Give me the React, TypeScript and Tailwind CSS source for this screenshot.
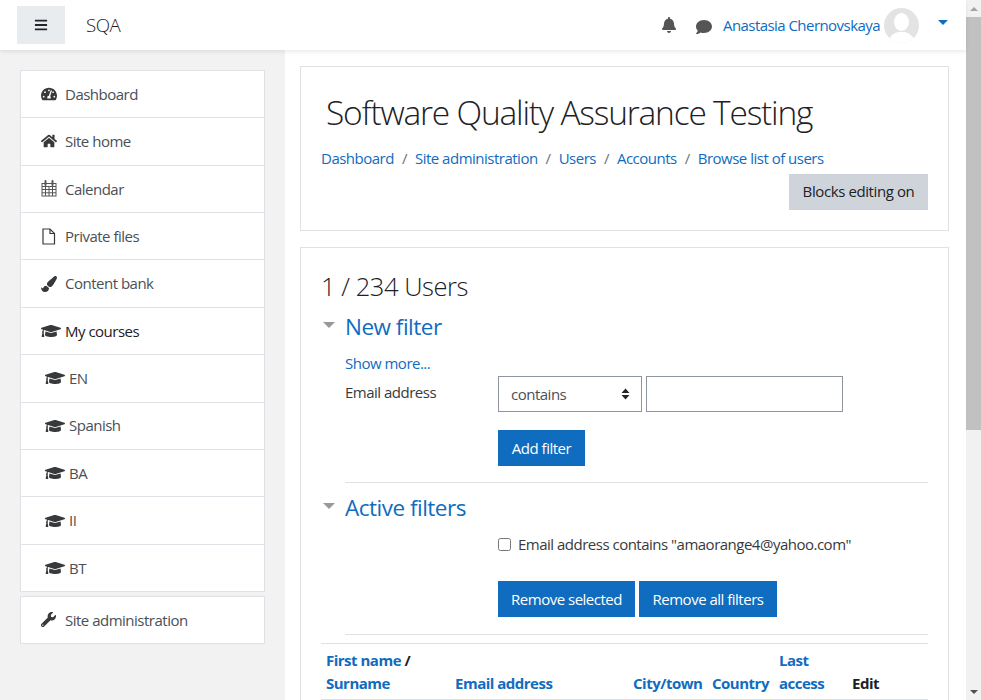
import { FaBars, FaBell, FaComment, FaGraduationCap, FaHome, FaPaintBrush, FaTachometerAlt, FaWrench } from 'react-icons/fa';
import type { ReactNode } from 'react';

function CalendarIcon() {
  return (
    <svg width="16" height="17" viewBox="0 0 16 17" fill="none" stroke="currentColor" strokeWidth="1" opacity="0.85">
      <rect x="1" y="3.500" width="14" height="12.500" />
      <path d="M1 6.500h14M1 9.500h14M1 12.800h14M4.500 6.500v9.500M8 6.500v9.500M11.500 6.500v9.500" />
      <path d="M4.500 1v4M11.500 1v4" strokeWidth="2" strokeLinecap="round" />
    </svg>
  );
}

function FileIcon() {
  return (
    <svg width="15" height="17" viewBox="0 0 15 17" fill="none" stroke="currentColor" strokeWidth="1.200">
      <path d="M2 1h7l4.500 4.500V16H2z" />
      <path d="M9 1v4.500h4.500" />
    </svg>
  );
}

const navItems = [
  { label: 'Dashboard', icon: <FaTachometerAlt size={16} /> },
  { label: 'Site home', icon: <FaHome size={16} /> },
  { label: 'Calendar', icon: <CalendarIcon /> },
  { label: 'Private files', icon: <FileIcon /> },
  { label: 'Content bank', icon: <FaPaintBrush size={16} /> },
  { label: 'My courses', icon: <FaGraduationCap size={20} />, dark: true },
  { label: 'EN', icon: <FaGraduationCap size={20} />, sub: true },
  { label: 'Spanish', icon: <FaGraduationCap size={20} />, sub: true },
  { label: 'BA', icon: <FaGraduationCap size={20} />, sub: true },
  { label: 'II', icon: <FaGraduationCap size={20} />, sub: true },
  { label: 'BT', icon: <FaGraduationCap size={20} />, sub: true },
];

const crumbs = ['Dashboard', 'Site administration', 'Users', 'Accounts', 'Browse list of users'];

function SideRow({ icon, label, dark, sub }: { icon: ReactNode; label: string; dark?: boolean; sub?: boolean }) {
  return (
    <div className={`flex items-center h-[47.4px] first:h-[47.2px] last:h-[46.2px] border-b border-[#dee2e6] last:border-b-0 ${sub ? 'pl-[24px]' : 'pl-[20px]'} ${dark ? 'text-[#1d2125]' : 'text-[#495057]'}`}>
      <span className="flex items-center shrink-0 w-[24px] text-[#373a3c]">{icon}</span>
      <span>{label}</span>
    </div>
  );
}

function Caret() {
  return <span className="w-0 h-0 border-x-[6px] border-x-transparent border-t-[6px] border-t-[#999] ml-[2px] mr-[10px] mt-[-4px]" />;
}

function BlueButton({ children, width }: { children: ReactNode; width: string }) {
  return <button className={`h-[36px] bg-[#0f6cbf] text-white ${width}`}>{children}</button>;
}

export default function App() {
  return (
    <div className="h-[700px] overflow-hidden flex bg-white text-[15px] tracking-[-0.5px] text-[#373a3c] font-['Open_Sans',sans-serif]">
      <div className="flex-1 min-w-0 flex flex-col">
        <header className="h-[50px] shrink-0 bg-white shadow-[0_2px_4px_rgba(0,0,0,0.08)] flex items-center relative z-10 pl-[17px] pr-[18px]">
          <button className="w-[48px] h-[38px] bg-[#e9ecef] flex items-center justify-center text-[#212529]">
            <FaBars size={14} />
          </button>
          <span className="ml-[21px] text-[18.75px] font-light text-[#1d2125]">SQA</span>
          <div className="ml-auto flex items-center">
            <FaBell size={16} className="text-[#555]" />
            <FaComment size={16} className="text-[#555] ml-[19px] mt-[4px]" />
            <span className="ml-[11px] tracking-[-0.55px] text-[#0f6cbf]">Anastasia Chernovskaya</span>
            <svg width="35" height="35" viewBox="0 0 35 35" className="ml-[4px]">
              <defs>
                <clipPath id="avatar"><circle cx="17.5" cy="17.5" r="17.5" /></clipPath>
              </defs>
              <g clipPath="url(#avatar)">
                <rect width="35" height="35" fill="#e3e3e3" />
                <ellipse cx="17.5" cy="14" rx="7.5" ry="9" fill="#fff" />
                <path d="M4 35c1-8 7-10 10-11h7c3 1 9 3 10 11z" fill="#fff" />
              </g>
            </svg>
            <span className="ml-[19px] mt-[-5px] w-0 h-0 border-x-[5px] border-x-transparent border-t-[5px] border-t-[#0f6cbf]" />
          </div>
        </header>

        <div className="flex flex-1 min-h-0">
          <aside className="w-[285px] shrink-0 bg-[#f2f2f2] pt-[20px] pl-[20px] pr-[20px]">
            <nav className="bg-white border border-[#dee2e6]">
              {navItems.map((item) => (
                <SideRow key={item.label} {...item} />
              ))}
            </nav>
            <div className="mt-[4px] bg-white border border-[#dee2e6]">
              <div className="flex items-center h-[46px] pl-[20px] text-[#495057]">
                <span className="flex items-center shrink-0 w-[24px] text-[#373a3c]"><FaWrench size={15} /></span>
                <span>Site administration</span>
              </div>
            </div>
          </aside>

          <main className="flex-1 min-w-0 pt-[16px] pl-[15px] pr-[17px]">
            <section className="h-[165px] border border-[#dee2e6] pt-[19px] pl-[20px] pr-[20px]">
              <h1 className="ml-[5px] text-[33.5px] leading-[52px] tracking-[-1.2px] font-light text-[#1d2125]">Software Quality Assurance Testing</h1>
              <div className="mt-[9px] flex items-center text-[#0f6cbf]">
                {crumbs.map((crumb, i) => (
                  <span key={crumb} className="flex items-center">
                    {i > 0 && <span className="mx-[8px] text-[#6a737b]">/</span>}
                    {crumb}
                  </span>
                ))}
              </div>
              <div className="flex justify-end mt-[4px]">
                <button className="h-[36px] w-[139px] tracking-[-0.4px] bg-[#ced4da] text-[#1d2125]">Blocks editing on</button>
              </div>
            </section>

            <section className="mt-[16px] border border-[#dee2e6] pt-[20px] pl-[20px] pr-[20px] h-[600px]">
              <h2 className="text-[25.5px] leading-[36px] tracking-[-0.45px] font-light text-[#1d2125]">1 / 234 Users</h2>

              <div className="flex items-center mt-[6px]">
                <Caret />
                <h3 className="text-[22.5px] leading-[34px] text-[#0f6cbf] font-normal">New filter</h3>
              </div>
              <div className="pl-[24px]">
                <div className="mt-[8px] text-[#0f6cbf] leading-[22px]">Show more...</div>
                <div className="flex mt-[2px]">
                  <div className="w-[153px] mt-[5px] leading-[22px]">Email address</div>
                  <div>
                    <div className="flex gap-[4px]">
                      <div className="w-[144px] h-[36px] border border-[#8f959e] flex items-center justify-between pl-[12px] pr-[11px] text-[#495057]">
                        contains
                        <svg width="9" height="12" viewBox="0 0 9 12" fill="#212529">
                          <path d="M4.500 0.500 8.500 5 0.500 5zM4.500 11.500 0.500 7 8.500 7z" />
                        </svg>
                      </div>
                      <input className="w-[197px] h-[36px] border border-[#8f959e] bg-white" />
                    </div>
                    <div className="mt-[18px]">
                      <BlueButton width="w-[87px]">Add filter</BlueButton>
                    </div>
                  </div>
                </div>
                <div className="mt-[16px] border-t border-[#dee2e6]" />
              </div>

              <div className="flex items-center mt-[8px]">
                <Caret />
                <h3 className="text-[22.5px] leading-[34px] text-[#0f6cbf] font-normal">Active filters</h3>
              </div>
              <div className="pl-[177px] mt-[8px] flex items-center gap-[7px] leading-[22px]">
                <span className="w-[13px] h-[13px] border border-[#767676] rounded-[2.5px] bg-white shrink-0" />
                <span>Email address contains "amaorange4@yahoo.com"</span>
              </div>
              <div className="pl-[177px] mt-[26px] flex gap-[4px]">
                <BlueButton width="w-[137px]">Remove selected</BlueButton>
                <BlueButton width="w-[138px]">Remove all filters</BlueButton>
              </div>
              <div className="ml-[24px] mt-[17px] border-t border-[#dee2e6]" />

              <table className="mt-[8px] w-full border-t border-b border-[#dee2e6] table-fixed">
                <thead>
                  <tr className="align-bottom font-bold text-left leading-[23px]">
                    <th className="w-[129px] pl-[5px] pt-[5px] pb-[4px] font-bold text-[#0f6cbf]">First name <span className="text-[#1d2125]">/</span><br />Surname</th>
                    <th className="w-[178px] pl-[5px] pb-[4px] font-bold text-[#0f6cbf]">Email address</th>
                    <th className="w-[79px] pl-[5px] pb-[4px] font-bold text-[#0f6cbf]">City/town</th>
                    <th className="w-[67px] pl-[5px] pb-[4px] font-bold text-[#0f6cbf]">Country</th>
                    <th className="w-[74px] pl-[5px] pb-[4px] font-bold text-[#0f6cbf]">Last<br />access</th>
                    <th className="pl-[4px] pb-[4px] font-bold text-[#1d2125]">Edit</th>
                  </tr>
                </thead>
              </table>
            </section>
          </main>
        </div>
      </div>

      <div className="w-[15px] shrink-0 bg-[#f1f1f1] flex flex-col items-center">
        <div className="h-[17px] flex items-center justify-center">
          <span className="w-0 h-0 border-x-[4px] border-x-transparent border-b-[4px] border-b-[#a3a3a3]" />
        </div>
        <div className="h-[413px] w-full bg-[#c1c1c1]" />
        <div className="flex-1" />
        <div className="h-[17px] flex items-center justify-center">
          <span className="w-0 h-0 border-x-[4px] border-x-transparent border-t-[4px] border-t-[#505050]" />
        </div>
      </div>
    </div>
  );
}
